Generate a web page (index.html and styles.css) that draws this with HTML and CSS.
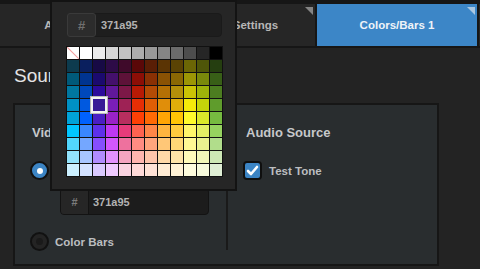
FILE: index.html
```
<html lang="en">
<head>
    <meta charset="UTF-8">
    <meta name="viewport" content="width=device-width, initial-scale=1.0">
    <title>Colors/Bars</title>
    <link rel="stylesheet" href="styles.css">
</head>
<body>
    <div class="tabs">
        <div class="tab">Audio Bus</div>
        <div class="tab">Output Settings</div>
        <div class="tab active">Colors/Bars 1</div>
        <div class="tab"></div>
    </div>
    <div class="page">
        <h1 class="title">Source</h1>
        <div class="panel">
            <div class="col video">
                <h2>Video Source</h2>
                <div class="option"><span class="radio checked"></span>Solid Color</div>
                <div class="color-field"><span class="hash">#</span><span class="value">371a95</span></div>
                <div class="option bars"><span class="radio"></span>Color Bars</div>
            </div>
            <div class="col audio">
                <h2>Audio Source</h2>
                <div class="option">
                    <span class="check">
                        <svg width="13" height="13" viewBox="0 0 13 13"><path d="M2 7 L5 10 L11 3" fill="none" stroke="#fff" stroke-width="2.6" stroke-linecap="round" stroke-linejoin="round"/></svg>
                    </span>Test Tone
                </div>
            </div>
        </div>
    </div>
    <div class="picker">
        <div class="color-field hex"><span class="hash">#</span><span class="value">371a95</span></div>
        <div class="swatches" id="swatches"></div>
    </div>
    <script>
        const palette = [
            ['transparent', '#ffffff', '#ebebeb', '#d6d6d6', '#c2c2c2', '#adadad', '#999999', '#858585', '#6b6b6b', '#4d4d4d', '#262626', '#000000'],
            ['#0d3b4e', '#0a1f5e', '#170a45', '#2d0b47', '#3f0a2a', '#5a0808', '#5a1e05', '#5b3404', '#5a4304', '#6b6605', '#4f5609', '#253e10'],
            ['#005a7a', '#003490', '#1b0a6e', '#44106c', '#5d1238', '#8c0e06', '#8a3004', '#8a5204', '#8a6804', '#9c9605', '#7a890b', '#385f17'],
            ['#0077a0', '#0048bb', '#2c0a9b', '#61189b', '#7c1847', '#b81a05', '#b44b05', '#b47005', '#b4900a', '#ccc405', '#9eb30a', '#4c7d20'],
            ['#0091c4', '#0059e0', '#371a95', '#7a1eb8', '#9e2255', '#e62e05', '#e05e05', '#e08e0a', '#e0ae0a', '#f5ea0a', '#c4d40a', '#5f9c2c'],
            ['#00a3d8', '#0061fe', '#4a1ec4', '#9a22c8', '#b82e5e', '#ff4005', '#ff6a05', '#ffa505', '#ffc405', '#fffb2c', '#dbe82a', '#76bb40'],
            ['#00c6ff', '#3a87fe', '#5e30eb', '#be38f3', '#e63b7a', '#ff6250', '#ff8648', '#feb43f', '#fecb3e', '#fff76b', '#e4ef65', '#96d35f'],
            ['#52d6fc', '#74a7ff', '#864ffe', '#d357fe', '#ee719e', '#ff8c82', '#ffa57d', '#ffc777', '#ffd977', '#fff994', '#eaf28f', '#b1dd8b'],
            ['#93e3fc', '#a7c6ff', '#b18cfe', '#e292fe', '#f4a4c0', '#ffb5af', '#ffc5ab', '#ffd9a8', '#fee4a8', '#fffbb9', '#f2f7b7', '#cde8b5'],
            ['#cbf0ff', '#d3e2ff', '#d9c9fe', '#efcaff', '#f9d3e0', '#ffdad8', '#ffe2d6', '#ffecd4', '#fff2d5', '#fefcdd', '#f7fadb', '#dfeed4']
        ];
        const selected = '#371a95';
        const grid = document.getElementById('swatches');

        palette.forEach(function (row) {
            row.forEach(function (color) {
                const cell = document.createElement('div');
                cell.className = 'swatch';
                if (color === 'transparent') {
                    cell.classList.add('none');
                } else {
                    cell.style.background = color;
                }
                if (color === selected) {
                    cell.classList.add('selected');
                }
                grid.appendChild(cell);
            });
        });
    </script>
</body>
</html>
```
FILE: styles.css
```
body {
    font-family: 'Liberation Sans', Arial, sans-serif;
    background-color: #232323;
    color: #c4c4c4;
    margin: 0;
    width: 480px;
    height: 269px;
    overflow: hidden;
    position: relative;
}

.tabs {
    display: flex;
    overflow: hidden;
    background-color: #161616;
    padding-top: 4px;
    border-bottom: 2px solid #161616;
}

.tab {
    flex: 0 0 160px;
    height: 42px;
    border-left: 2px solid #161616;
    background-color: #262626;
    color: #b6b6b6;
    font-size: 11.5px;
    font-weight: bold;
    display: flex;
    align-items: center;
    justify-content: center;
    position: relative;
}

.tab:first-child {
    margin-left: -9px;
}

.tab::after {
    content: '';
    position: absolute;
    top: 3px;
    right: 2px;
    border-style: solid;
    border-width: 0 8px 8px 0;
    border-color: transparent #858585 transparent transparent;
}

.tab.active {
    background-color: #3c86c7;
    color: #eef3f8;
}

.tab.active::after {
    border-right-color: #a9c7e2;
}

.page {
    padding-left: 13px;
}

.title {
    margin: 17px 0 16px 1px;
    font-size: 19px;
    line-height: 22px;
    font-weight: normal;
    color: #e4e4e4;
}

.panel {
    width: 426px;
    height: 163px;
    box-sizing: border-box;
    border: 2px solid #161616;
    background-color: #292d2f;
    display: flex;
    padding: 14px 0;
}

.col {
    box-sizing: border-box;
    padding-left: 15px;
}

.video {
    width: 213px;
    border-right: 2px solid #1a1a1a;
}

.audio {
    flex: 1;
}

.col h2 {
    margin: 6px 0 0 2px;
    font-size: 13px;
    line-height: 15px;
    color: #c6c8ca;
}

.audio h2 {
    margin-left: 3px;
}

.option {
    display: flex;
    align-items: center;
    height: 19px;
    margin-top: 21px;
    font-size: 11.5px;
    font-weight: bold;
    color: #bcbec0;
}

.option.bars {
    margin-top: 17px;
}

.radio {
    width: 19px;
    height: 19px;
    box-sizing: border-box;
    border-radius: 50%;
    border: 2px solid #111;
    background-color: #242424;
    margin-right: 6px;
    display: flex;
    align-items: center;
    justify-content: center;
}

.radio::after {
    content: '';
    width: 7px;
    height: 7px;
    border-radius: 50%;
    background-color: #1a1a1a;
}

.radio.checked {
    background-color: #3b84c4;
}

.radio.checked::after {
    width: 6px;
    height: 6px;
    background-color: #fff;
}

.check {
    width: 19px;
    height: 19px;
    box-sizing: border-box;
    border: 2px solid #0f0f0f;
    border-radius: 4px;
    background-color: #3b84c4;
    margin-right: 7px;
    display: flex;
    align-items: center;
    justify-content: center;
}

.color-field {
    display: flex;
    width: 149px;
    height: 27px;
    box-sizing: border-box;
    margin: 8px 0 0 30px;
    background-color: #1c1c1c;
    border: 1px solid #131313;
    border-radius: 4px;
    font-size: 11px;
    font-weight: bold;
}

.hash {
    width: 27px;
    display: flex;
    align-items: center;
    justify-content: center;
    background-color: #262626;
    border-right: 1px solid #131313;
    border-radius: 3px 0 0 3px;
    color: #7c7c7c;
}

.value {
    display: flex;
    align-items: center;
    padding-left: 4px;
    color: #b2b2b2;
}

.picker {
    position: absolute;
    left: 50px;
    top: 0;
    width: 187px;
    height: 191px;
    box-sizing: border-box;
    border: 2px solid #131313;
    background-color: #262626;
    padding: 11px 12px 0 14px;
}

.color-field.hex {
    width: 155px;
    height: 24px;
    margin: 0 0 0 1px;
    background-color: #1e1e1e;
    border-color: #1a1a1a;
}

.color-field.hex .hash {
    background-color: #2c2c2c;
    border: 1px solid #3a3a3a;
    border-radius: 3px;
    margin: -1px 0 -1px -1px;
    color: #707070;
    font-size: 13px;
}

.color-field.hex .value {
    padding-left: 5px;
}

.swatches {
    margin-top: 9px;
    display: grid;
    grid-template-columns: repeat(12, 12px);
    grid-auto-rows: 12px;
    gap: 1px;
    padding: 1px;
    width: max-content;
    background-color: #111;
}

.swatch {
    width: 12px;
    height: 12px;
}

.swatch.none {
    background: linear-gradient(to top right, #fff calc(50% - 1px), #f4a3a3 50%, #fff calc(50% + 1px));
}

.swatch.selected {
    position: relative;
    z-index: 1;
    box-shadow: 0 0 0 2px #f2f2f2, 0 0 0 3px #b8b8b8;
}
```
